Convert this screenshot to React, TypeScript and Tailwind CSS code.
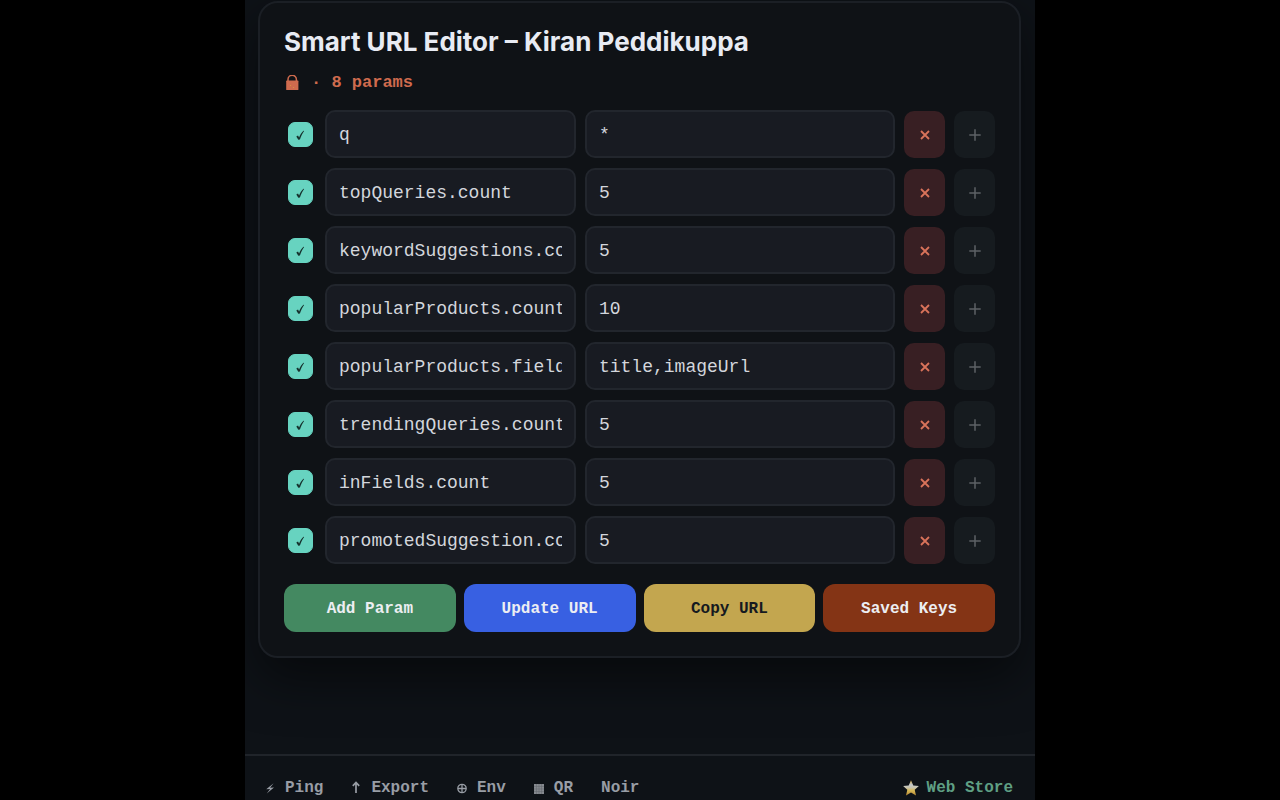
import React, { useState } from 'react';

interface Param {
  id: number;
  key: string;
  value: string;
  enabled: boolean;
}

const initialParams: Param[] = [
  { id: 1, key: 'q', value: '*', enabled: true },
  { id: 2, key: 'topQueries.count', value: '5', enabled: true },
  { id: 3, key: 'keywordSuggestions.count', value: '5', enabled: true },
  { id: 4, key: 'popularProducts.count', value: '10', enabled: true },
  { id: 5, key: 'popularProducts.fields', value: 'title,imageUrl', enabled: true },
  { id: 6, key: 'trendingQueries.count', value: '5', enabled: true },
  { id: 7, key: 'inFields.count', value: '5', enabled: true },
  { id: 8, key: 'promotedSuggestion.count', value: '5', enabled: true },
];

const inputClass =
  'h-12 w-full min-w-0 rounded-[10px] border-2 border-[#22262d] bg-[#181b22] px-3 pt-0.5 text-lg text-[#d3d6dc] outline-none focus:border-[#67d3c0]';

function LockIcon() {
  return (
    <svg className="h-4 w-4" viewBox="0 0 16 16" fill="none" aria-hidden="true">
      <path d="M4 7V4.400a4.200 4.200 0 0 1 8.400 0V7" stroke="#cf6b4e" strokeWidth="1.500" />
      <rect x="2.200" y="5.600" width="12.200" height="9.400" rx="0.600" fill="#cf6b4e" />
      <circle cx="6.600" cy="10.500" r="0.500" fill="#d9a441" />
      <circle cx="9.600" cy="12.500" r="0.500" fill="#d9a441" />
    </svg>
  );
}

function StarIcon() {
  return (
    <svg className="h-4 w-4" viewBox="0 0 16 16" aria-hidden="true">
      <defs>
        <linearGradient id="star" x1="0" y1="0" x2="0" y2="1">
          <stop offset="0.05" stopColor="#c9a653" />
          <stop offset="0.3" stopColor="#c3c8cc" />
          <stop offset="0.5" stopColor="#c9c4ac" />
          <stop offset="0.68" stopColor="#d6b755" />
          <stop offset="1" stopColor="#b98a35" />
        </linearGradient>
      </defs>
      <path
        d="M8 .2l2.300 5.300 5.600.500-4.200 3.700 1.300 5.700L8 12.400 3 15.400l1.300-5.700L.1 6l5.600-.5z"
        fill="url(#star)"
      />
    </svg>
  );
}

function ParamRow({ param, onChange, onRemove, onInsert }: {
  param: Param;
  onChange: (changes: Partial<Param>) => void;
  onRemove: () => void;
  onInsert: () => void;
}) {
  return (
    <li className="grid grid-cols-[32px_minmax(0,17fr)_minmax(0,21fr)_41px_41px] items-center gap-[9px]">
      <label className="relative mx-auto block h-[25px] w-[25px]">
        <input
          type="checkbox"
          aria-label={`Enable ${param.key}`}
          checked={param.enabled}
          onChange={e => onChange({ enabled: e.target.checked })}
          className="peer block h-[25px] w-[25px] appearance-none rounded-[7px] border border-[#2a3038] bg-[#181b22] checked:border-[#67d3c0] checked:bg-[#67d3c0]"
        />
        <svg
          className="pointer-events-none absolute inset-0 hidden h-full w-full peer-checked:block"
          viewBox="0 0 25 25"
          aria-hidden="true"
        >
          <path
            d="M8.300 14.400l1.700-.9 1.100 2c1.100-2.700 2.400-4.800 4.300-6.700l.7.200c-1.800 2.500-3.100 5.200-4.200 8.500l-1.600.3z"
            fill="#16312d"
          />
        </svg>
      </label>
      <input
        aria-label="Key"
        className={inputClass}
        value={param.key}
        onChange={e => onChange({ key: e.target.value })}
      />
      <input
        aria-label="Value"
        className={inputClass}
        value={param.value}
        onChange={e => onChange({ value: e.target.value })}
      />
      <button
        type="button"
        aria-label="Remove param"
        onClick={onRemove}
        className="flex h-[47px] items-center justify-center rounded-[10px] bg-[#381f23] pt-0.5"
      >
        <svg className="h-3 w-3" viewBox="0 0 12 12" stroke="#d9735a" strokeWidth="1.800" aria-hidden="true">
          <path d="M2 2l8 8M10 2l-8 8" />
        </svg>
      </button>
      <button
        type="button"
        aria-label="Insert param below"
        onClick={onInsert}
        className="flex h-[47px] items-center justify-center rounded-[10px] bg-[#161b1f] pt-0.5"
      >
        <svg className="h-3 w-3" viewBox="0 0 12 12" stroke="#5d6266" strokeWidth="1.500" aria-hidden="true">
          <path d="M6 .3v11.400M.3 6h11.400" />
        </svg>
      </button>
    </li>
  );
}

export default function App() {
  const [params, setParams] = useState<Param[]>(initialParams);

  const update = (id: number, changes: Partial<Param>) =>
    setParams(params.map(p => (p.id === id ? { ...p, ...changes } : p)));

  const remove = (id: number) => setParams(params.filter(p => p.id !== id));

  const insertAt = (index: number) => {
    const next = [...params];
    next.splice(index, 0, { id: Date.now(), key: '', value: '', enabled: true });
    setParams(next);
  };

  return (
    <div className="h-screen overflow-hidden bg-black font-['Liberation_Mono',monospace]">
      <div className="mx-auto flex h-full max-w-[790px] flex-col overflow-hidden bg-[#0e1217]">
        <main className="grow pt-px pr-3.5 pl-[13px]">
          <section className="rounded-[20px] border-2 border-[#1b1f25] bg-[#0f1216] p-6 shadow-[0_20px_50px_rgba(0,0,0,0.5)]">
            <h1 className="font-['Inter',sans-serif] text-[26px] leading-[30px] font-bold text-[#e8ebf3]">
              Smart URL Editor – Kiran Peddikuppa
            </h1>
            <p className="mt-3.5 flex h-6 items-center gap-[11px] text-[17px] font-bold text-[#cf6b4e]">
              <LockIcon />
              <span>· {params.length} params</span>
            </p>

            <ul className="mt-[15px] space-y-2.5">
              {params.map((param, index) => (
                <ParamRow
                  key={param.id}
                  param={param}
                  onChange={changes => update(param.id, changes)}
                  onRemove={() => remove(param.id)}
                  onInsert={() => insertAt(index + 1)}
                />
              ))}
            </ul>

            <div className="mt-5 grid grid-cols-4 gap-2 text-base font-bold text-[#eceef2]">
              <button
                type="button"
                onClick={() => insertAt(params.length)}
                className="h-12 rounded-xl bg-[#448961] pt-0.5"
              >
                Add Param
              </button>
              <button type="button" className="h-12 rounded-xl bg-[#3860e2] pt-0.5">
                Update URL
              </button>
              <button type="button" className="h-12 rounded-xl bg-[#c3a64f] pt-0.5 text-[#15191f]">
                Copy URL
              </button>
              <button type="button" className="h-12 rounded-xl bg-[#843415] pt-0.5">
                Saved Keys
              </button>
            </div>
          </section>
        </main>

        <footer className="flex h-[46px] shrink-0 items-start justify-between border-t-2 border-[#20242a] pt-5 pr-[22px] pl-5 text-base font-bold text-[#989da5]">
          <nav className="flex gap-7">
            <button type="button" className="flex items-center gap-2.5">
              <svg className="h-4 w-2.5" viewBox="0 0 10 16" aria-hidden="true">
                <path d="M8.600 3.200L1.200 9.200l3.900-.2-3.300 4.400 7.200-5.800-3.900.2z" fill="#989da5" />
              </svg>
              Ping
            </button>
            <button type="button" className="flex items-center gap-2.5">
              <svg className="h-4 w-2.5" viewBox="0 0 10 16" fill="none" stroke="#989da5" strokeWidth="1.700" aria-hidden="true">
                <path d="M5 13V2.500M1.800 5.800L5 2.500l3.200 3.300" />
              </svg>
              Export
            </button>
            <button type="button" className="flex items-center gap-2.5">
              <svg className="h-4 w-2.5" viewBox="0 0 10 16" fill="none" stroke="#989da5" strokeWidth="1.300" aria-hidden="true">
                <circle cx="5" cy="8.500" r="4.200" />
                <path d="M5 4.500v8M1 8.500h8" />
              </svg>
              Env
            </button>
            <button type="button" className="flex items-center gap-2.5">
              <svg className="h-4 w-2.5" viewBox="0 0 10 16" aria-hidden="true">
                <path d="M0 4h10v10H0z" fill="#85898f" />
                <path d="M2.500 4v10M5 4v10M7.500 4v10M0 6.500h10M0 9h10M0 11.500h10" stroke="#62666c" strokeWidth="0.500" />
              </svg>
              QR
            </button>
            <button type="button">Noir</button>
          </nav>
          <a href="#store" className="flex items-center gap-2 text-[#5f9f83]">
            <StarIcon />
            Web Store
          </a>
        </footer>
      </div>
    </div>
  );
}
